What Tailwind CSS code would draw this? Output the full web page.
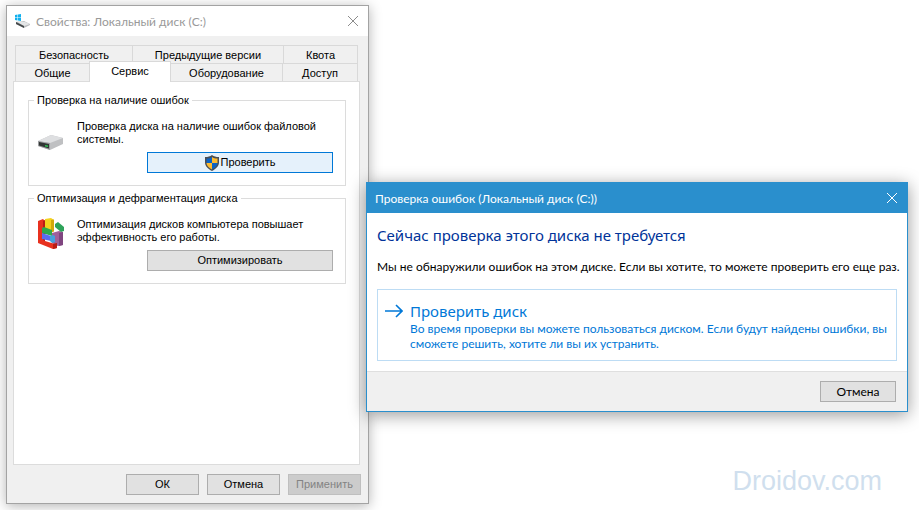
<!DOCTYPE html>
<html lang="ru">
<head>
    <meta charset="UTF-8">
    <meta name="viewport" content="width=device-width, initial-scale=1.0">
    <title>Проверка диска</title>
    <script src="https://cdn.jsdelivr.net/npm/@tailwindcss/browser@4"></script>
</head>
<body class="relative min-h-screen overflow-hidden bg-white text-black">

    <!-- Disk properties window -->
    <section class="absolute top-[5px] bottom-[6px] left-[6px] w-[39.5%] flex flex-col border border-[#a3a3a3] bg-[#f0f0f0] shadow-[0_2px_12px_rgba(0,0,0,0.3)] font-['Liberation_Sans',sans-serif] text-[11px] leading-[13px]">
        <header class="flex items-center h-[30px] pl-2 pr-[9px] bg-white text-[#999999] font-['Lato',sans-serif] text-[12px]">
            <svg class="w-4 h-4 mr-[5px]" viewBox="0 0 16 16">
                <path d="M1 9l8-1 6 3v1l-6 3-8-4z" fill="#b9bcbe"/>
                <path d="M1 8l9 1 5 2-6 2z" fill="#e4e6e7"/>
                <path d="M1 9l8 4v2l-8-4z" fill="#44484a"/>
                <path d="M0 2l2.500-.5v2.500H0zM3 1.400L6 1v3H3zM0 4.500h2.500V7.500L0 7zM3 4.500h3V8l-3-.5z" fill="#12b0ee"/>
            </svg>
            <h1 class="flex-1">Свойства: Локальный диск (C:)</h1>
            <button aria-label="Закрыть" class="w-3 h-3">
                <svg viewBox="0 0 12 12"><path d="M1 1l10 10M11 1L1 11" stroke="#8c8c8c" fill="none"/></svg>
            </button>
        </header>

        <div class="flex flex-col flex-1 pl-[6px] pr-2 pt-[9px]">
            <!-- Tabs -->
            <nav class="mx-[2px]">
                <div class="flex h-[18px] border-t border-l border-[#d9d9d9]">
                    <button class="w-[117px] pt-px border-r border-[#d9d9d9]">Безопасность</button>
                    <button class="w-[151px] pt-px border-r border-[#d9d9d9]">Предыдущие версии</button>
                    <button class="flex-1 pt-px border-r border-[#d9d9d9]">Квота</button>
                </div>
                <div class="flex h-[18px] border-t border-l border-[#d9d9d9]">
                    <button class="w-[73px] pt-px">Общие</button>
                    <button class="relative z-10 w-[82px] -mt-[3px] -mb-px pb-px border border-b-0 border-[#d9d9d9] bg-white">Сервис</button>
                    <button class="w-[112px] pt-px border-r border-[#d9d9d9]">Оборудование</button>
                    <button class="flex-1 pt-px border-r border-[#d9d9d9]">Доступ</button>
                </div>
            </nav>

            <!-- Tab page -->
            <div class="flex flex-col flex-1 gap-[6px] pt-3 pl-[14px] pr-[13px] border border-[#dcdcdc] bg-white">
                <fieldset class="flex items-start gap-[11px] pt-[13px] pb-3 pl-[9px] pr-3 border border-[#dcdcdc]">
                    <legend class="-ml-1 px-[3px]">Проверка на наличие ошибок</legend>
                    <svg class="w-7 h-8 mt-[7px] shrink-0" viewBox="0 0 28 32">
                        <path d="M0 14l13-6 12 3v6l-13 6-12-4z" fill="#bfc0c2"/>
                        <path d="M0 14l13-6 12 3-13 5z" fill="#dedfe1"/>
                        <path d="M0 14l12 2v7L0 19z" fill="#9a9c9e"/>
                        <path d="M1 15l10 2v4.500L1 18.500z" fill="#303533"/>
                        <path d="M7 18l3 .5v1.500l-3-.5z" fill="#2fbf52"/>
                    </svg>
                    <div class="flex flex-col flex-1 gap-[6px]">
                        <p>Проверка диска на наличие ошибок файловой системы.</p>
                        <button class="self-end flex items-center justify-center w-[186px] h-[21px] border border-[#0078d7] bg-[#e5f1fb]">
                            <svg class="w-4 h-4" viewBox="0 0 16 16">
                                <path d="M8 0C6 1.500 4 2 1 2v5.500C1 11 4 14 8 16c4-2 7-5 7-8.500V2C12 2 10 1.500 8 0z" fill="#4b4f55"/>
                                <path d="M8 2C6.500 3 4.800 3.500 2.500 3.600V8H8z" fill="#0d63c4"/>
                                <path d="M8 2v6h5.500V3.600C11.200 3.500 9.500 3 8 2z" fill="#fdbb30"/>
                                <path d="M2.500 8c.2 3 2.500 5 5.500 6.400V8z" fill="#fdbb30"/>
                                <path d="M8 8v6.400c3-1.400 5.300-3.400 5.500-6.400z" fill="#0d63c4"/>
                            </svg>
                            Проверить
                        </button>
                    </div>
                </fieldset>

                <fieldset class="flex items-start gap-[11px] pt-[13px] pb-3 pl-[9px] pr-3 border border-[#dcdcdc]">
                    <legend class="-ml-1 px-[3px]">Оптимизация и дефрагментация диска</legend>
                    <svg class="w-7 h-8 shrink-0" viewBox="0 0 28 32">
                        <path d="M7 1l6-1 3 2v11l-9 2z" fill="#f3d21f"/>
                        <path d="M13 2l3-.5v12l-3 1z" fill="#d1a80d"/>
                        <path d="M14 15l7-2 4 1v13l-5 1-6-3z" fill="#a0609a"/>
                        <path d="M21 15l4-1v13l-4 1z" fill="#7f4580"/>
                        <path d="M17 6l3-2 6 5v4l-3 1-6-5z" fill="#2ea35a"/>
                        <path d="M0 3l5-2 2 2v20l10 3 2-1v5l-4 1L0 25z" fill="#e8311f"/>
                        <path d="M5 3l2-1v21l-2-1zM15 26l4-1v5l-4 1z" fill="#b91c14"/>
                        <path d="M4 10l2-1 8 3v6l-10-3z" fill="#2fa84c"/>
                        <path d="M4 15l9 3v5l-9-2z" fill="#5a6cf0"/>
                        <path d="M12 18l3-1 2 1v6l-3 1-2-2z" fill="#44a1dd"/>
                    </svg>
                    <div class="flex flex-col flex-1 gap-[6px]">
                        <p>Оптимизация дисков компьютера повышает эффективность его работы.</p>
                        <button class="self-end w-[186px] h-[21px] border border-[#adadad] bg-[#e1e1e1]">Оптимизировать</button>
                    </div>
                </fieldset>
            </div>
        </div>

        <footer class="flex justify-end gap-2 pt-[9px] pb-2 pr-[7px]">
            <button class="w-[73px] h-[21px] border border-[#adadad] bg-[#e1e1e1]">ОК</button>
            <button class="w-[73px] h-[21px] border border-[#adadad] bg-[#e1e1e1]">Отмена</button>
            <button disabled class="w-[73px] h-[21px] border border-[#bfbfbf] bg-[#cccccc] text-[#838383]">Применить</button>
        </footer>
    </section>

    <!-- Error check dialog -->
    <section role="dialog" class="absolute top-[182px] left-[366px] right-[11px] border border-[#2a8fcd] bg-white shadow-[0_3px_16px_rgba(0,0,0,0.4)] font-['Lato',sans-serif] text-[12px] leading-[15px]">
        <header class="flex items-center h-[30px] pl-2 pr-[9px] bg-[#2a8fcd] text-white">
            <h2 class="flex-1">Проверка ошибок (Локальный диск (C:))</h2>
            <button aria-label="Закрыть" class="w-3 h-3">
                <svg viewBox="0 0 12 12"><path d="M1 1l10 10M11 1L1 11" stroke="#ffffff" fill="none"/></svg>
            </button>
        </header>
        <div class="px-[10px] pt-3 pb-[10px]">
            <h3 class="font-['Noto_Sans',sans-serif] text-[15px] leading-[20px] text-[#003399]">Сейчас проверка этого диска не требуется</h3>
            <p class="mt-[14px] whitespace-nowrap">Мы не обнаружили ошибок на этом диске. Если вы хотите, то можете проверить его еще раз.</p>
            <button class="flex items-start w-full mt-[15px] pt-[11px] pb-[9px] pl-[7px] border border-[#bddcf4] text-left text-[#0078d7]">
                <svg class="w-[18px] h-5 mr-[7px] shrink-0" viewBox="0 0 18 20"><path d="M0 10h17M11 4l6 6-6 6" stroke="#0078d7" stroke-width="1.600" fill="none"/></svg>
                <span class="flex-1">
                    <span class="block font-['Noto_Sans',sans-serif] text-[15px] leading-[20px]">Проверить диск</span>
                    <span class="block">Во время проверки вы можете пользоваться диском. Если будут найдены ошибки, вы сможете решить, хотите ли вы их устранить.</span>
                </span>
            </button>
        </div>
        <footer class="flex justify-end pt-[9px] pb-[9px] pr-[11px] border-t border-[#dfdfdf] bg-[#f0f0f0]">
            <button class="w-[76px] h-[21px] border border-[#adadad] bg-[#e1e1e1]">Отмена</button>
        </footer>
    </section>

    <!-- Watermark -->
    <p class="absolute right-[37px] bottom-[13px] font-['Liberation_Sans',sans-serif] text-[27px] leading-[32px] text-[#d0dfee]">Droidov.com</p>
</body>
</html>
